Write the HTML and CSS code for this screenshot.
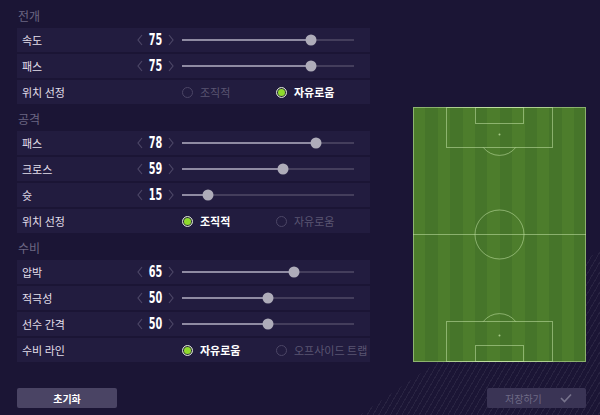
FILE: index.html
```html
<!DOCTYPE html>
<html>
<head>
    <title>팀 전술</title>
    <link rel="stylesheet" href="styles.css">
</head>
<body>
    <div class="stripes"></div>
    <div class="page">
        <div class="main">
            <div class="settings">
                <div class="section">
                    <div class="section-title">전개</div>
                    <div class="row">
                        <span class="label">속도</span>
                        <div class="stepper">
                            <svg class="chev" width="6" height="12" viewBox="0 0 6 12"><polyline points="5,1 1,6 5,11"/></svg>
                            <span class="value">75</span>
                            <svg class="chev" width="6" height="12" viewBox="0 0 6 12"><polyline points="1,1 5,6 1,11"/></svg>
                        </div>
                        <div class="slider"><div class="fill" style="width:75%"></div><div class="thumb" style="left:75%"></div></div>
                    </div>
                    <div class="row">
                        <span class="label">패스</span>
                        <div class="stepper">
                            <svg class="chev" width="6" height="12" viewBox="0 0 6 12"><polyline points="5,1 1,6 5,11"/></svg>
                            <span class="value">75</span>
                            <svg class="chev" width="6" height="12" viewBox="0 0 6 12"><polyline points="1,1 5,6 1,11"/></svg>
                        </div>
                        <div class="slider"><div class="fill" style="width:75%"></div><div class="thumb" style="left:75%"></div></div>
                    </div>
                    <div class="row">
                        <span class="label">위치 선정</span>
                        <div class="options">
                            <span class="option"><span class="radio"></span>조직적</span>
                            <span class="option on"><span class="radio"></span>자유로움</span>
                        </div>
                    </div>
                </div>

                <div class="section">
                    <div class="section-title">공격</div>
                    <div class="row">
                        <span class="label">패스</span>
                        <div class="stepper">
                            <svg class="chev" width="6" height="12" viewBox="0 0 6 12"><polyline points="5,1 1,6 5,11"/></svg>
                            <span class="value">78</span>
                            <svg class="chev" width="6" height="12" viewBox="0 0 6 12"><polyline points="1,1 5,6 1,11"/></svg>
                        </div>
                        <div class="slider"><div class="fill" style="width:78%"></div><div class="thumb" style="left:78%"></div></div>
                    </div>
                    <div class="row">
                        <span class="label">크로스</span>
                        <div class="stepper">
                            <svg class="chev" width="6" height="12" viewBox="0 0 6 12"><polyline points="5,1 1,6 5,11"/></svg>
                            <span class="value">59</span>
                            <svg class="chev" width="6" height="12" viewBox="0 0 6 12"><polyline points="1,1 5,6 1,11"/></svg>
                        </div>
                        <div class="slider"><div class="fill" style="width:59%"></div><div class="thumb" style="left:59%"></div></div>
                    </div>
                    <div class="row">
                        <span class="label">슛</span>
                        <div class="stepper">
                            <svg class="chev" width="6" height="12" viewBox="0 0 6 12"><polyline points="5,1 1,6 5,11"/></svg>
                            <span class="value">15</span>
                            <svg class="chev" width="6" height="12" viewBox="0 0 6 12"><polyline points="1,1 5,6 1,11"/></svg>
                        </div>
                        <div class="slider"><div class="fill" style="width:15%"></div><div class="thumb" style="left:15%"></div></div>
                    </div>
                    <div class="row">
                        <span class="label">위치 선정</span>
                        <div class="options">
                            <span class="option on"><span class="radio"></span>조직적</span>
                            <span class="option"><span class="radio"></span>자유로움</span>
                        </div>
                    </div>
                </div>

                <div class="section">
                    <div class="section-title">수비</div>
                    <div class="row">
                        <span class="label">압박</span>
                        <div class="stepper">
                            <svg class="chev" width="6" height="12" viewBox="0 0 6 12"><polyline points="5,1 1,6 5,11"/></svg>
                            <span class="value">65</span>
                            <svg class="chev" width="6" height="12" viewBox="0 0 6 12"><polyline points="1,1 5,6 1,11"/></svg>
                        </div>
                        <div class="slider"><div class="fill" style="width:65%"></div><div class="thumb" style="left:65%"></div></div>
                    </div>
                    <div class="row">
                        <span class="label">적극성</span>
                        <div class="stepper">
                            <svg class="chev" width="6" height="12" viewBox="0 0 6 12"><polyline points="5,1 1,6 5,11"/></svg>
                            <span class="value">50</span>
                            <svg class="chev" width="6" height="12" viewBox="0 0 6 12"><polyline points="1,1 5,6 1,11"/></svg>
                        </div>
                        <div class="slider"><div class="fill" style="width:50%"></div><div class="thumb" style="left:50%"></div></div>
                    </div>
                    <div class="row">
                        <span class="label">선수 간격</span>
                        <div class="stepper">
                            <svg class="chev" width="6" height="12" viewBox="0 0 6 12"><polyline points="5,1 1,6 5,11"/></svg>
                            <span class="value">50</span>
                            <svg class="chev" width="6" height="12" viewBox="0 0 6 12"><polyline points="1,1 5,6 1,11"/></svg>
                        </div>
                        <div class="slider"><div class="fill" style="width:50%"></div><div class="thumb" style="left:50%"></div></div>
                    </div>
                    <div class="row">
                        <span class="label">수비 라인</span>
                        <div class="options">
                            <span class="option on"><span class="radio"></span>자유로움</span>
                            <span class="option"><span class="radio"></span>오프사이드 트랩</span>
                        </div>
                    </div>
                </div>
            </div>

            <div class="pitch-panel">
                <div class="pitch">
                    <svg width="173" height="255" viewBox="0 0 173 255">
                        <g fill="none" stroke="rgba(205,235,175,0.5)" stroke-width="1">
                            <rect x="0.5" y="0.5" width="172" height="254"/>
                            <line x1="0" y1="127.5" x2="173" y2="127.5"/>
                            <circle cx="86.5" cy="127.5" r="24.5"/>
                            <rect x="33.5" y="0.5" width="106" height="40"/>
                            <rect x="62.5" y="0.5" width="48" height="16"/>
                            <path d="M70.3 40.5 A20.6 20.6 0 0 0 102.7 40.5"/>
                            <rect x="33.5" y="214.5" width="106" height="40"/>
                            <rect x="62.5" y="238.5" width="48" height="16"/>
                            <path d="M70.3 214.5 A20.6 20.6 0 0 1 102.7 214.5"/>
                        </g>
                        <g fill="rgba(205,235,175,0.7)">
                            <circle cx="86.5" cy="27.5" r="1"/>
                            <circle cx="86.5" cy="228.5" r="1"/>
                        </g>
                    </svg>
                </div>
            </div>
        </div>

        <div class="footer">
            <button class="btn">초기화</button>
            <button class="btn save">
                <span>저장하기</span>
                <svg width="12" height="10" viewBox="0 0 12 10"><polyline points="1,5 4.5,8.5 11,1.5" fill="none" stroke="#77738c" stroke-width="1.6"/></svg>
            </button>
        </div>
    </div>
</body>
</html>
```

FILE: styles.css
```css
html, body {
    margin: 0;
    padding: 0;
}
body {
    width: 600px;
    height: 415px;
    overflow: hidden;
    background-color: #1b1535;
    font-family: "Noto Sans CJK KR", "Noto Sans", sans-serif;
    color: #e4e1ec;
    position: relative;
}
.stripes {
    position: absolute;
    left: 0;
    top: 0;
    width: 600px;
    height: 415px;
    background: repeating-linear-gradient(120deg, rgba(255, 255, 255, 0.06) 0 1px, transparent 1px 5px);
    clip-path: polygon(360px 415px, 600px 415px, 600px 250px);
}
.page {
    position: relative;
    display: flex;
    flex-direction: column;
    height: 415px;
}
.main {
    display: flex;
    height: 388px;
}
.settings {
    width: 353px;
    margin-left: 17px;
    padding-top: 6px;
    display: flex;
    flex-direction: column;
    gap: 5px;
}
.section {
    display: flex;
    flex-direction: column;
    gap: 2px;
}
.section-title {
    height: 20px;
    line-height: 20px;
    font-size: 12px;
    color: #6c6783;
    padding-left: 1px;
}
.row {
    height: 24px;
    background-color: #221c3f;
    display: grid;
    grid-template-columns: 115px 45px 172px;
    align-items: center;
    padding-left: 5px;
}
.label {
    font-size: 11px;
    color: #e2dfea;
}
.stepper {
    display: flex;
    align-items: center;
    justify-content: space-between;
    width: 37px;
}
.chev {
    display: block;
}
.chev polyline {
    fill: none;
    stroke: #4c4666;
    stroke-width: 1.2;
}
.value {
    display: inline-block;
    font-family: "DejaVu Sans Condensed", "DejaVu Sans", sans-serif;
    font-weight: bold;
    font-size: 15px;
    line-height: 15px;
    color: #ffffff;
    transform: scaleX(0.72);
}
.slider {
    position: relative;
    height: 2px;
    background-color: #443e5c;
}
.fill {
    height: 2px;
    background-color: #8f8ba2;
}
.thumb {
    position: absolute;
    top: 50%;
    width: 11px;
    height: 11px;
    border-radius: 50%;
    background-color: #aeacb9;
    transform: translate(-50%, -50%);
}
.options {
    grid-column: 2 / 4;
    display: flex;
    padding-left: 45px;
}
.option {
    width: 94px;
    flex: none;
    display: flex;
    align-items: center;
    gap: 7px;
    font-size: 11px;
    color: #5a5572;
    white-space: nowrap;
}
.option.on {
    color: #ffffff;
    font-weight: bold;
}
.radio {
    box-sizing: border-box;
    width: 11px;
    height: 11px;
    border-radius: 50%;
    border: 1.5px solid #4c4666;
}
.option.on .radio {
    border: 1.5px solid #d6d5da;
    background-color: #8fdb2c;
    box-shadow: inset 0 0 0 1px #2a2440;
}
.pitch-panel {
    flex: 1;
    padding: 107px 0 0 43px;
}
.pitch {
    width: 173px;
    height: 255px;
    background: repeating-linear-gradient(90deg, #4d7d2c 0 12.4px, #46752a 12.4px 24.8px);
}
.pitch svg {
    display: block;
}
.footer {
    display: flex;
    justify-content: space-between;
    padding: 0 14px 0 17px;
}
.btn {
    width: 100px;
    height: 20px;
    border: none;
    border-radius: 2px;
    background-color: #4a4464;
    color: #ffffff;
    font-family: "Noto Sans CJK KR", sans-serif;
    font-size: 10px;
    font-weight: bold;
    padding: 0;
}
.btn.save {
    width: 99px;
    background-color: #3a3455;
    color: #6e6a85;
    font-weight: normal;
    display: flex;
    align-items: center;
    justify-content: space-between;
    padding: 0 14px 0 18px;
}
```
